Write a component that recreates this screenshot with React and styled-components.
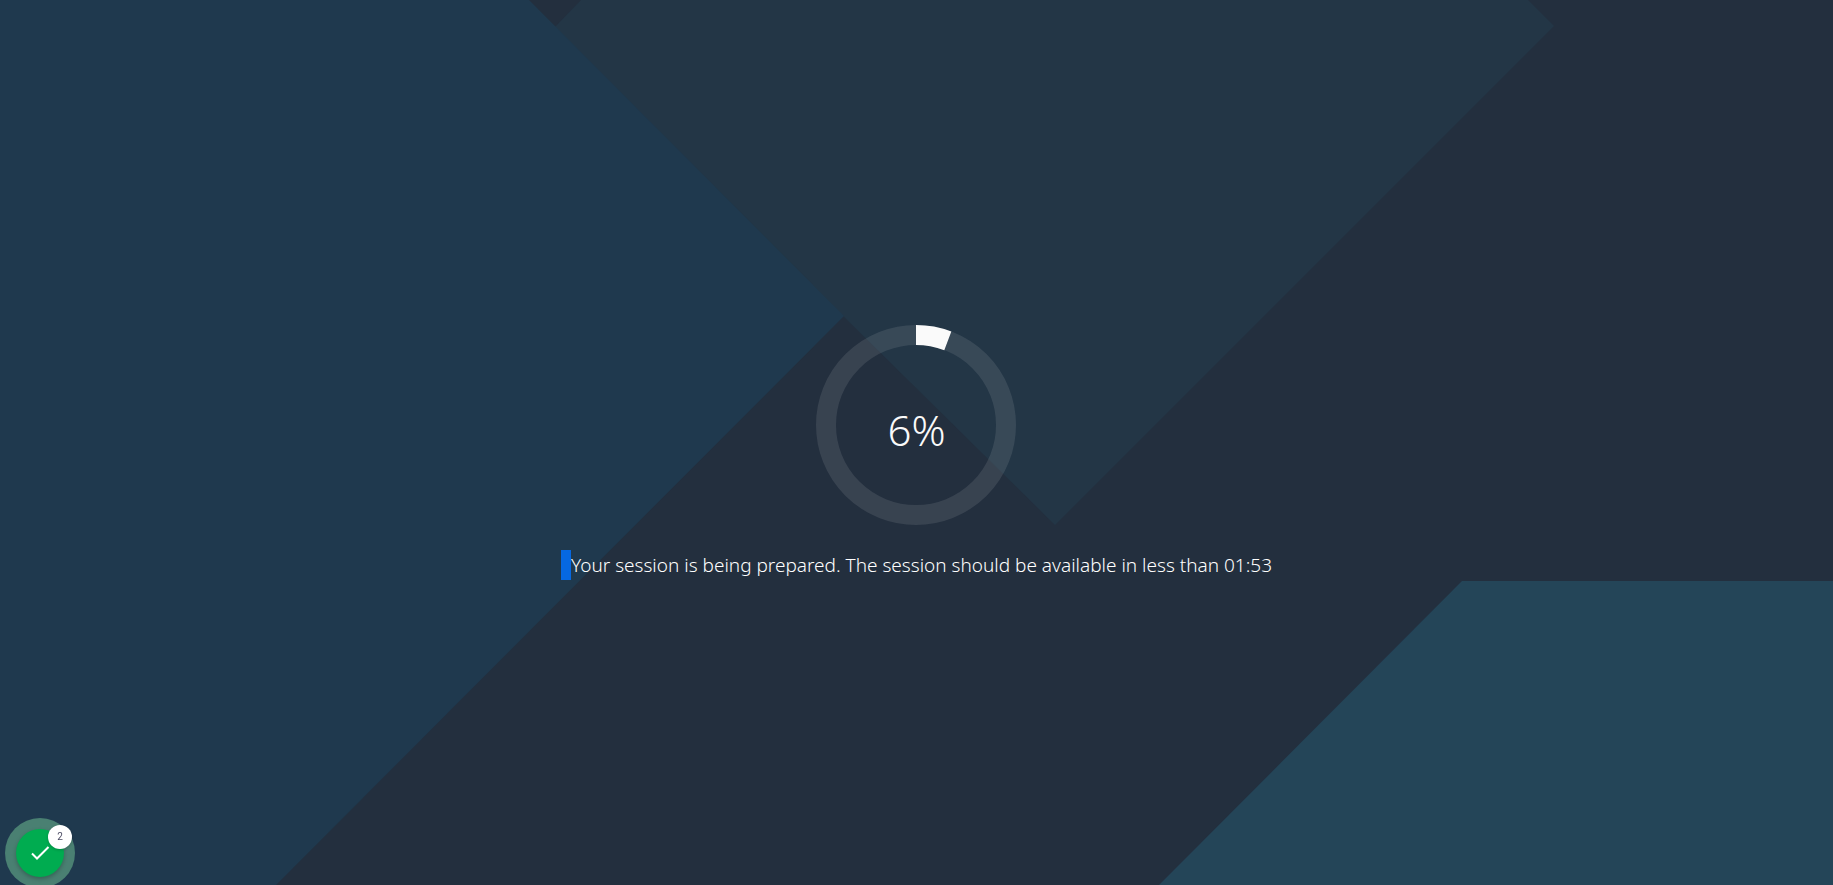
import React from 'react';
import styled, { createGlobalStyle } from 'styled-components';

const GlobalStyle = createGlobalStyle`
  * { box-sizing: border-box; }
  body {
    margin: 0;
    background: #232f3e;
    color: #fafafa;
    font-family: 'Noto Sans', 'Open Sans', sans-serif;
  }
`;

const Page = styled.main`
  min-height: 100vh;
  padding-top: 20px;
  display: flex;
  align-items: center;
  justify-content: center;
  position: relative;
  overflow: hidden;
`;

const Backdrop = styled.svg`
  position: absolute;
  inset: 0;
  width: 100%;
  height: 100%;
`;

const Status = styled.section`
  position: relative;
  display: flex;
  flex-direction: column;
  align-items: center;
  gap: 25px;
`;

const Gauge = styled.div`
  display: grid;
  place-items: center;
  width: 200px;
  height: 200px;

  > * { grid-area: 1 / 1; }
`;

const Percent = styled.span`
  padding-top: 10px;
  font-size: 42px;
  font-weight: 300;
  line-height: 48px;
`;

const Message = styled.p`
  margin: 0;
  display: flex;
  color: #fff;
  font-size: 19px;
  font-weight: 300;
  line-height: 30px;
`;

const Highlight = styled.span`
  width: 10px;
  background: #0668e1;
`;

const Assistant = styled.button`
  position: fixed;
  left: 5px;
  bottom: -3px;
  width: 70px;
  height: 70px;
  padding: 0;
  border: 0;
  border-radius: 50%;
  background: #4a8072;
  display: grid;
  place-items: center;
  cursor: pointer;
`;

const Disc = styled.span`
  width: 48px;
  height: 48px;
  border-radius: 50%;
  background: #00ac50;
  box-shadow: 0 2px 4px rgba(0, 0, 0, 0.25);
  display: grid;
  place-items: center;
`;

const Badge = styled.span`
  position: absolute;
  top: 7px;
  right: 3px;
  width: 24px;
  height: 24px;
  border-radius: 50%;
  background: #fff;
  box-shadow: 0 1px 3px rgba(0, 0, 0, 0.2);
  color: #4b4b63;
  font-family: Roboto, sans-serif;
  font-size: 10px;
  line-height: 24px;
  text-align: center;
`;

function ProgressRing({ value }) {
  const angle = (value / 100) * 2 * Math.PI;
  const point = (r) => `${100 + r * Math.sin(angle)} ${100 - r * Math.cos(angle)}`;
  return (
    <svg width="200" height="200" viewBox="0 0 200 200" aria-hidden="true">
      <circle cx="100" cy="100" r="90" fill="none" stroke="#fafafa" strokeOpacity="0.1" strokeWidth="20" />
      <path d={`M100 0A100 100 0 0 1 ${point(100)}L${point(80)}A80 80 0 0 0 100 20Z`} fill="#fafafa" />
    </svg>
  );
}

export default function App() {
  const progress = 5.75;
  return (
    <>
      <GlobalStyle />
      <Page>
        <Backdrop viewBox="0 0 1833 885" preserveAspectRatio="xMidYMid slice" aria-hidden="true">
          <path d="M581 0H1528L1554 26L1055 525L835 308L555 27Z" fill="#233646" />
          <path d="M0 0H529L844 316L276 885H0Z" fill="#1f394e" />
          <path d="M1462 581H1833V885H1159Z" fill="#244558" />
        </Backdrop>
        <Status role="status">
          <Gauge>
            <ProgressRing value={progress} />
            <Percent>{Math.round(progress)}%</Percent>
          </Gauge>
          <Message>
            <Highlight />
            Your session is being prepared. The session should be available in less than 01:53
          </Message>
        </Status>
        <Assistant type="button" aria-label="Assistant, 2 notifications">
          <Disc>
            <svg width="24" height="24" viewBox="0 0 24 24" fill="none" stroke="#fff" strokeWidth="2" aria-hidden="true">
              <path d="M4 12.5L9 17.5L20.5 6" />
            </svg>
          </Disc>
          <Badge>2</Badge>
        </Assistant>
      </Page>
    </>
  );
}
